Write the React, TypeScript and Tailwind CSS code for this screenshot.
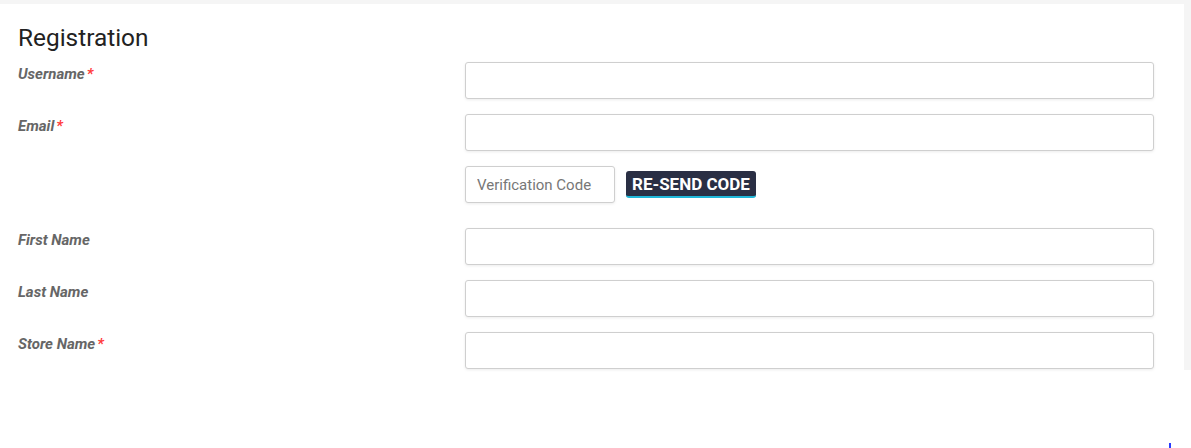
const fields: { label: string; required?: boolean }[] = [
  { label: "First Name" },
  { label: "Last Name" },
  { label: "Store Name", required: true },
];

function FieldLabel({ label, required }: { label: string; required?: boolean }) {
  return (
    <label className="pt-[2px] text-[15px] leading-5 font-bold italic text-[#666]">
      {label}
      {required && <span className="ml-[2px] text-[#ff3b3b]">*</span>}
    </label>
  );
}

function TextInput({ className = "" }: { className?: string }) {
  return (
    <input
      type="text"
      className={`h-[37px] rounded-[3px] border border-[#cfcfcf] bg-white px-3 text-[15px] text-[#333] shadow-[0_1px_3px_rgba(0,0,0,0.08)] outline-none ${className}`}
    />
  );
}

export default function App() {
  return (
    <div className="relative h-[448px] bg-white font-['Roboto','Liberation_Sans',sans-serif]">
      <div className="bg-[#f5f5f5] pt-1 pr-[7px]">
        <section className="h-[366px] bg-white pl-[18px] pr-[30px] pt-5">
          <h1 className="text-[24.4px] leading-7 text-[#222]">Registration</h1>

          <div className="mt-[10px] grid grid-cols-[447px_1fr] gap-y-[15px]">
            <FieldLabel label="Username" required />
            <TextInput />

            <FieldLabel label="Email" required />
            <TextInput />

            <div />
            <div className="mb-[10px] flex items-center gap-[11px]">
              <input
                type="text"
                placeholder="Verification Code"
                className="h-[37px] w-[150px] rounded-[3px] border border-[#cfcfcf] bg-white px-[11px] text-[15px] text-[#333] shadow-[0_1px_3px_rgba(0,0,0,0.08)] outline-none placeholder:text-[#777]"
              />
              <button
                type="button"
                className="h-[27px] rounded-[3px] border-b-2 border-[#1fb6d8] bg-[#2a2f44] px-[6px] text-[17px] leading-5 font-bold text-white"
              >
                RE-SEND CODE
              </button>
            </div>

            {fields.map((f) => (
              <div key={f.label} className="contents">
                <FieldLabel label={f.label} required={f.required} />
                <TextInput />
              </div>
            ))}
          </div>
        </section>
      </div>
      <span aria-hidden="true" className="absolute bottom-0 left-[1169px] h-[5px] w-[2px] bg-[#2a3cff]" />
    </div>
  );
}
